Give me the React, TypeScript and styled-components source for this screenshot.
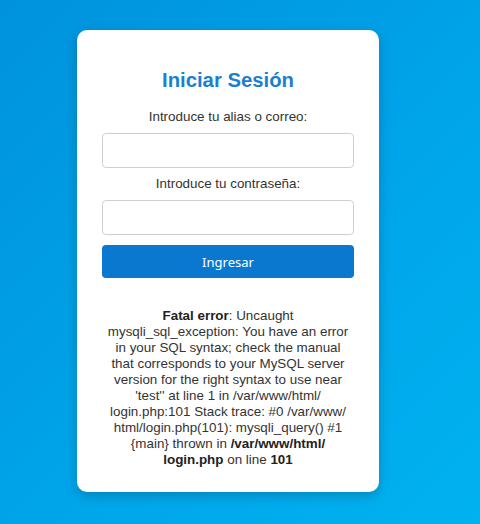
import styled, { createGlobalStyle } from 'styled-components';

const GlobalStyle = createGlobalStyle`
  html, body {
    margin: 0;
    padding: 0;
    height: 100%;
  }
  body {
    font-family: "Liberation Sans", Arial, sans-serif;
    background: linear-gradient(135deg, #0092dd 0%, #00a6ea 60%, #00b2f0 100%);
    overflow: hidden;
  }
`;

const Page = styled.main`
  display: flex;
  justify-content: center;
  align-items: flex-start;
  width: 456px;
  height: 524px;
  padding-top: 30px;
  box-sizing: border-box;
`;

const Card = styled.div`
  box-sizing: border-box;
  width: 302px;
  height: 462px;
  background: #fff;
  border-radius: 10px;
  box-shadow: 0 4px 12px rgba(0, 0, 0, 0.2);
  padding: 38px 25px 25px;
  text-align: center;
`;

const Title = styled.h2`
  margin: 0 0 17px;
  font-size: 20.3px;
  line-height: 24px;
  font-weight: 700;
  color: #1a7fd2;
`;

const Form = styled.form`
  display: flex;
  flex-direction: column;
`;

const Label = styled.label`
  font-size: 13.4px;
  line-height: 16px;
  color: #333;
  margin-bottom: 8px;
`;

const Input = styled.input`
  box-sizing: border-box;
  height: 35px;
  width: 100%;
  border: 1px solid #cfcfcf;
  border-radius: 4px;
  margin-bottom: 8px;
  font-size: 14px;
`;

const Button = styled.button`
  height: 33px;
  margin-top: 2px;
  border: none;
  border-radius: 4px;
  background: #0a78cf;
  color: #fff;
  font-family: "Noto Sans", sans-serif;
  font-size: 13px;
`;

const ErrorText = styled.div`
  margin-top: 30px;
  padding: 0 2px;
  font-size: 13.4px;
  line-height: 16px;
  color: #333;

  b {
    color: #222;
  }
`;

export default function App() {
  return (
    <>
      <GlobalStyle />
      <Page>
        <Card>
          <Title>Iniciar Sesión</Title>
          <Form onSubmit={(e) => e.preventDefault()}>
            <Label>Introduce tu alias o correo:</Label>
            <Input type="text" />
            <Label>Introduce tu contraseña:</Label>
            <Input type="password" />
            <Button type="submit">Ingresar</Button>
          </Form>
          <ErrorText>
            <b>Fatal error</b>: Uncaught mysqli_sql_exception: You have an error in your SQL syntax;
            check the manual that corresponds to your MySQL server version for the right syntax to use
            near 'test'' at line 1 in /var/<wbr />www/<wbr />html/<wbr />login.php:101 Stack trace: #0
            /var/<wbr />www/<wbr />html/<wbr />login.php(101): mysqli_query() #1 {'{main}'} thrown in{' '}
            <b>
              /var/<wbr />www/<wbr />html/<wbr />login.php
            </b>{' '}
            on line <b>101</b>
          </ErrorText>
        </Card>
      </Page>
    </>
  );
}
